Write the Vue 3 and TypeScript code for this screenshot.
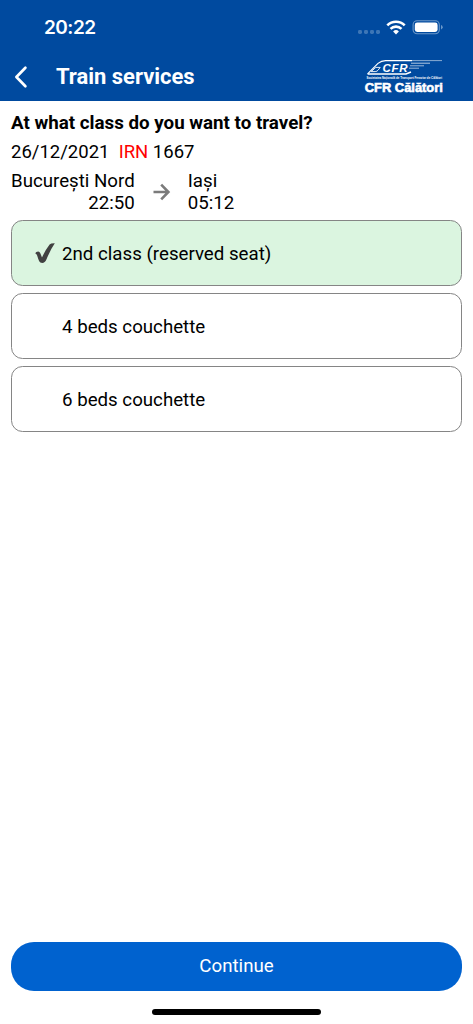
<script setup lang="ts">
import { ref } from 'vue'

interface TravelClass {
  id: number
  label: string
}

const classes: TravelClass[] = [
  { id: 1, label: '2nd class (reserved seat)' },
  { id: 2, label: '4 beds couchette' },
  { id: 3, label: '6 beds couchette' },
]
const selected = ref(1)
</script>

<template>
  <div class="screen">
    <header class="header">
      <div class="status">
        <span class="clock">20:22</span>
        <svg class="status-icons" width="92" height="20" viewBox="0 0 92 20">
          <g fill="#3d76b6">
            <rect x="1" y="10" width="4" height="4" rx="1.4" />
            <rect x="7" y="10" width="4" height="4" rx="1.4" />
            <rect x="13" y="10" width="4" height="4" rx="1.4" />
            <rect x="19" y="10" width="4" height="4" rx="1.4" />
          </g>
          <g fill="none" stroke="#fff" stroke-width="2.6">
            <path d="M30.3 5.4a12.2 12.2 0 0 1 17.4 0" />
            <path d="M33.5 8.9a7.8 7.8 0 0 1 11 0" />
          </g>
          <path d="M36.1 11.4a4.3 4.3 0 0 1 5.8 0L39 14.4z" fill="#fff" />
          <rect x="56.1" y=".8" width="26.2" height="12.9" rx="4" fill="none" stroke="#6b98c9" stroke-width="1.1" />
          <rect x="57.8" y="2.5" width="22.8" height="9.5" rx="2.4" fill="#fff" />
          <path d="M84 5.1q1.7.6 1.7 2.2T84 9.5z" fill="#6b98c9" />
        </svg>
      </div>
      <div class="bar">
        <svg class="back" width="16" height="24" viewBox="0 0 16 24">
          <path d="M12.4 2.8 3.4 12l9 9.2" fill="none" stroke="#fff" stroke-width="2.7" stroke-linecap="round" stroke-linejoin="round" />
        </svg>
        <h1 class="title">Train services</h1>
        <svg class="logo" width="82" height="38" viewBox="0 0 82 38">
          <path d="M3.6 15.8 14 5.4Q17.4 2.6 21.5 2.6H48" fill="none" stroke="#fff" stroke-width="1.2" />
          <path d="M3.6 16H42L47 14" fill="none" stroke="#fff" stroke-width="1.5" />
          <path d="M7.2 13.6 11.8 9.4h4.4l-2 2.6q-1 1.6-3 1.6z" fill="none" stroke="#fff" stroke-width=".9" />
          <g stroke="#fff" fill="none">
            <path d="M48 2.6H78" stroke-width=".9" opacity=".6" />
            <path d="M47 5.2H66" stroke-width="1" opacity=".7" />
            <path d="M46 7.8H60" stroke-width="1" opacity=".6" />
            <path d="M45 10.2H55" stroke-width="1" opacity=".6" />
          </g>
          <text class="logo-mark" x="18.5" y="14" textLength="25" lengthAdjust="spacing">CFR</text>
          <text class="logo-small" x="2.5" y="20.7" textLength="75.5" lengthAdjust="spacingAndGlyphs">Societatea Națională de Transport Feroviar de Călători</text>
          <text class="logo-name" x=".8" y="34" textLength="78" lengthAdjust="spacingAndGlyphs">CFR Călători</text>
        </svg>
      </div>
    </header>

    <main class="content">
      <h2 class="question">At what class do you want to travel?</h2>
      <p class="train">26/12/2021&nbsp; <span class="category">IRN</span> 1667</p>
      <div class="route">
        <div class="stop from"><span>București Nord</span><span>22:50</span></div>
        <svg class="arrow" width="18" height="18" viewBox="0 0 18 18">
          <path d="M.5 9H15M8.2 1.7 15.4 9l-7.2 7.3" fill="none" stroke="#7b7b7b" stroke-width="2.6" />
        </svg>
        <div class="stop"><span>Iași</span><span>05:12</span></div>
      </div>
      <div class="options">
        <button
          v-for="c in classes"
          :key="c.id"
          class="option"
          :class="{ active: c.id === selected }"
          @click="selected = c.id"
        >
          <span class="mark">
            <svg v-if="c.id === selected" width="22" height="22" viewBox="0 0 22 22">
              <path d="M1.2 11.2Q2 9.4 4.2 9.4 5.6 9.5 6.3 11.2L8 15.4Q11.5 7.6 15.6 2.4 16.8 1.1 20.8 1.2 16.5 7.4 12.4 17.6 11 21 8.2 21 6 21 5.2 19.2 4.3 17.2 3.3 13.9 2.7 12 1.2 11.2Z" fill="#414141" />
            </svg>
          </span>
          <span class="label">{{ c.label }}</span>
        </button>
      </div>
    </main>

    <footer class="footer">
      <button class="continue">Continue</button>
      <div class="home"></div>
    </footer>
  </div>
</template>

<style>
body {
  margin: 0;
  background: #fff;
}
</style>

<style scoped>
.screen {
  display: flex;
  flex-direction: column;
  box-sizing: border-box;
  width: 473px;
  height: 1024px;
  overflow: hidden;
  background: #fff;
  color: #000;
  font-family: Roboto, "Liberation Sans", sans-serif;
  font-size: 18.7px;
  line-height: 22px;
}
.header {
  flex: none;
  box-sizing: border-box;
  height: 101px;
  background: #004a9f;
  color: #fff;
}
.status {
  display: flex;
  justify-content: space-between;
  align-items: center;
  height: 54px;
  padding: 0 24px 0 44px;
}
.status-icons {
  margin-top: 6px;
}
.clock {
  padding-top: 2px;
  font: 560 19px/24px Inter, sans-serif;
  letter-spacing: -0.5px;
}
.bar {
  display: flex;
  align-items: center;
  height: 46px;
  padding: 0 27px 0 13px;
}
.title {
  flex: 1;
  margin: 0 0 0 27px;
  font-size: 21.95px;
  font-weight: 700;
}
.logo {
  overflow: visible;
}
.logo-mark {
  fill: #fff;
  font: italic 700 11.5px "Liberation Sans", sans-serif;
}
.logo-small {
  fill: #fff;
  font: 700 3.8px/4px "Liberation Sans", sans-serif;
}
.logo-name {
  fill: #fff;
  stroke: #fff;
  stroke-width: 0.6px;
  font: 700 13.5px "Liberation Sans", sans-serif;
}
.content {
  flex: 1;
  padding: 11px 11px 0;
}
.question {
  margin: 0;
  font-size: 18.75px;
  font-weight: 700;
}
.train {
  margin: 7px 0;
  font-size: 18.5px;
}
.category {
  color: #f00;
}
.route {
  display: flex;
  align-items: center;
}
.stop {
  display: flex;
  flex-direction: column;
}
.from {
  text-align: right;
}
.arrow {
  margin: 0 17px 0 18px;
}
.options {
  display: flex;
  flex-direction: column;
  gap: 7px;
  margin-top: 6px;
}
.option {
  display: flex;
  align-items: center;
  box-sizing: border-box;
  height: 66px;
  padding: 0 0 0 22px;
  border: 1.14px solid #858585;
  border-radius: 11.5px;
  background: #fff;
  color: #000;
  font: inherit;
}
.option.active {
  background: #dbf5e0;
}
.mark {
  display: flex;
  width: 28px;
}
.label {
  padding-top: 1px;
}
.footer {
  flex: none;
  height: 82px;
  padding: 0 11px;
}
.continue {
  display: block;
  width: 100%;
  height: 49px;
  padding: 0 0 1px;
  border: 0;
  border-radius: 23px;
  background: #0062cf;
  color: #fff;
  font: inherit;
}
.home {
  width: 169px;
  height: 6px;
  margin: 18px auto 0;
  border-radius: 3px;
  background: #000;
}
</style>
